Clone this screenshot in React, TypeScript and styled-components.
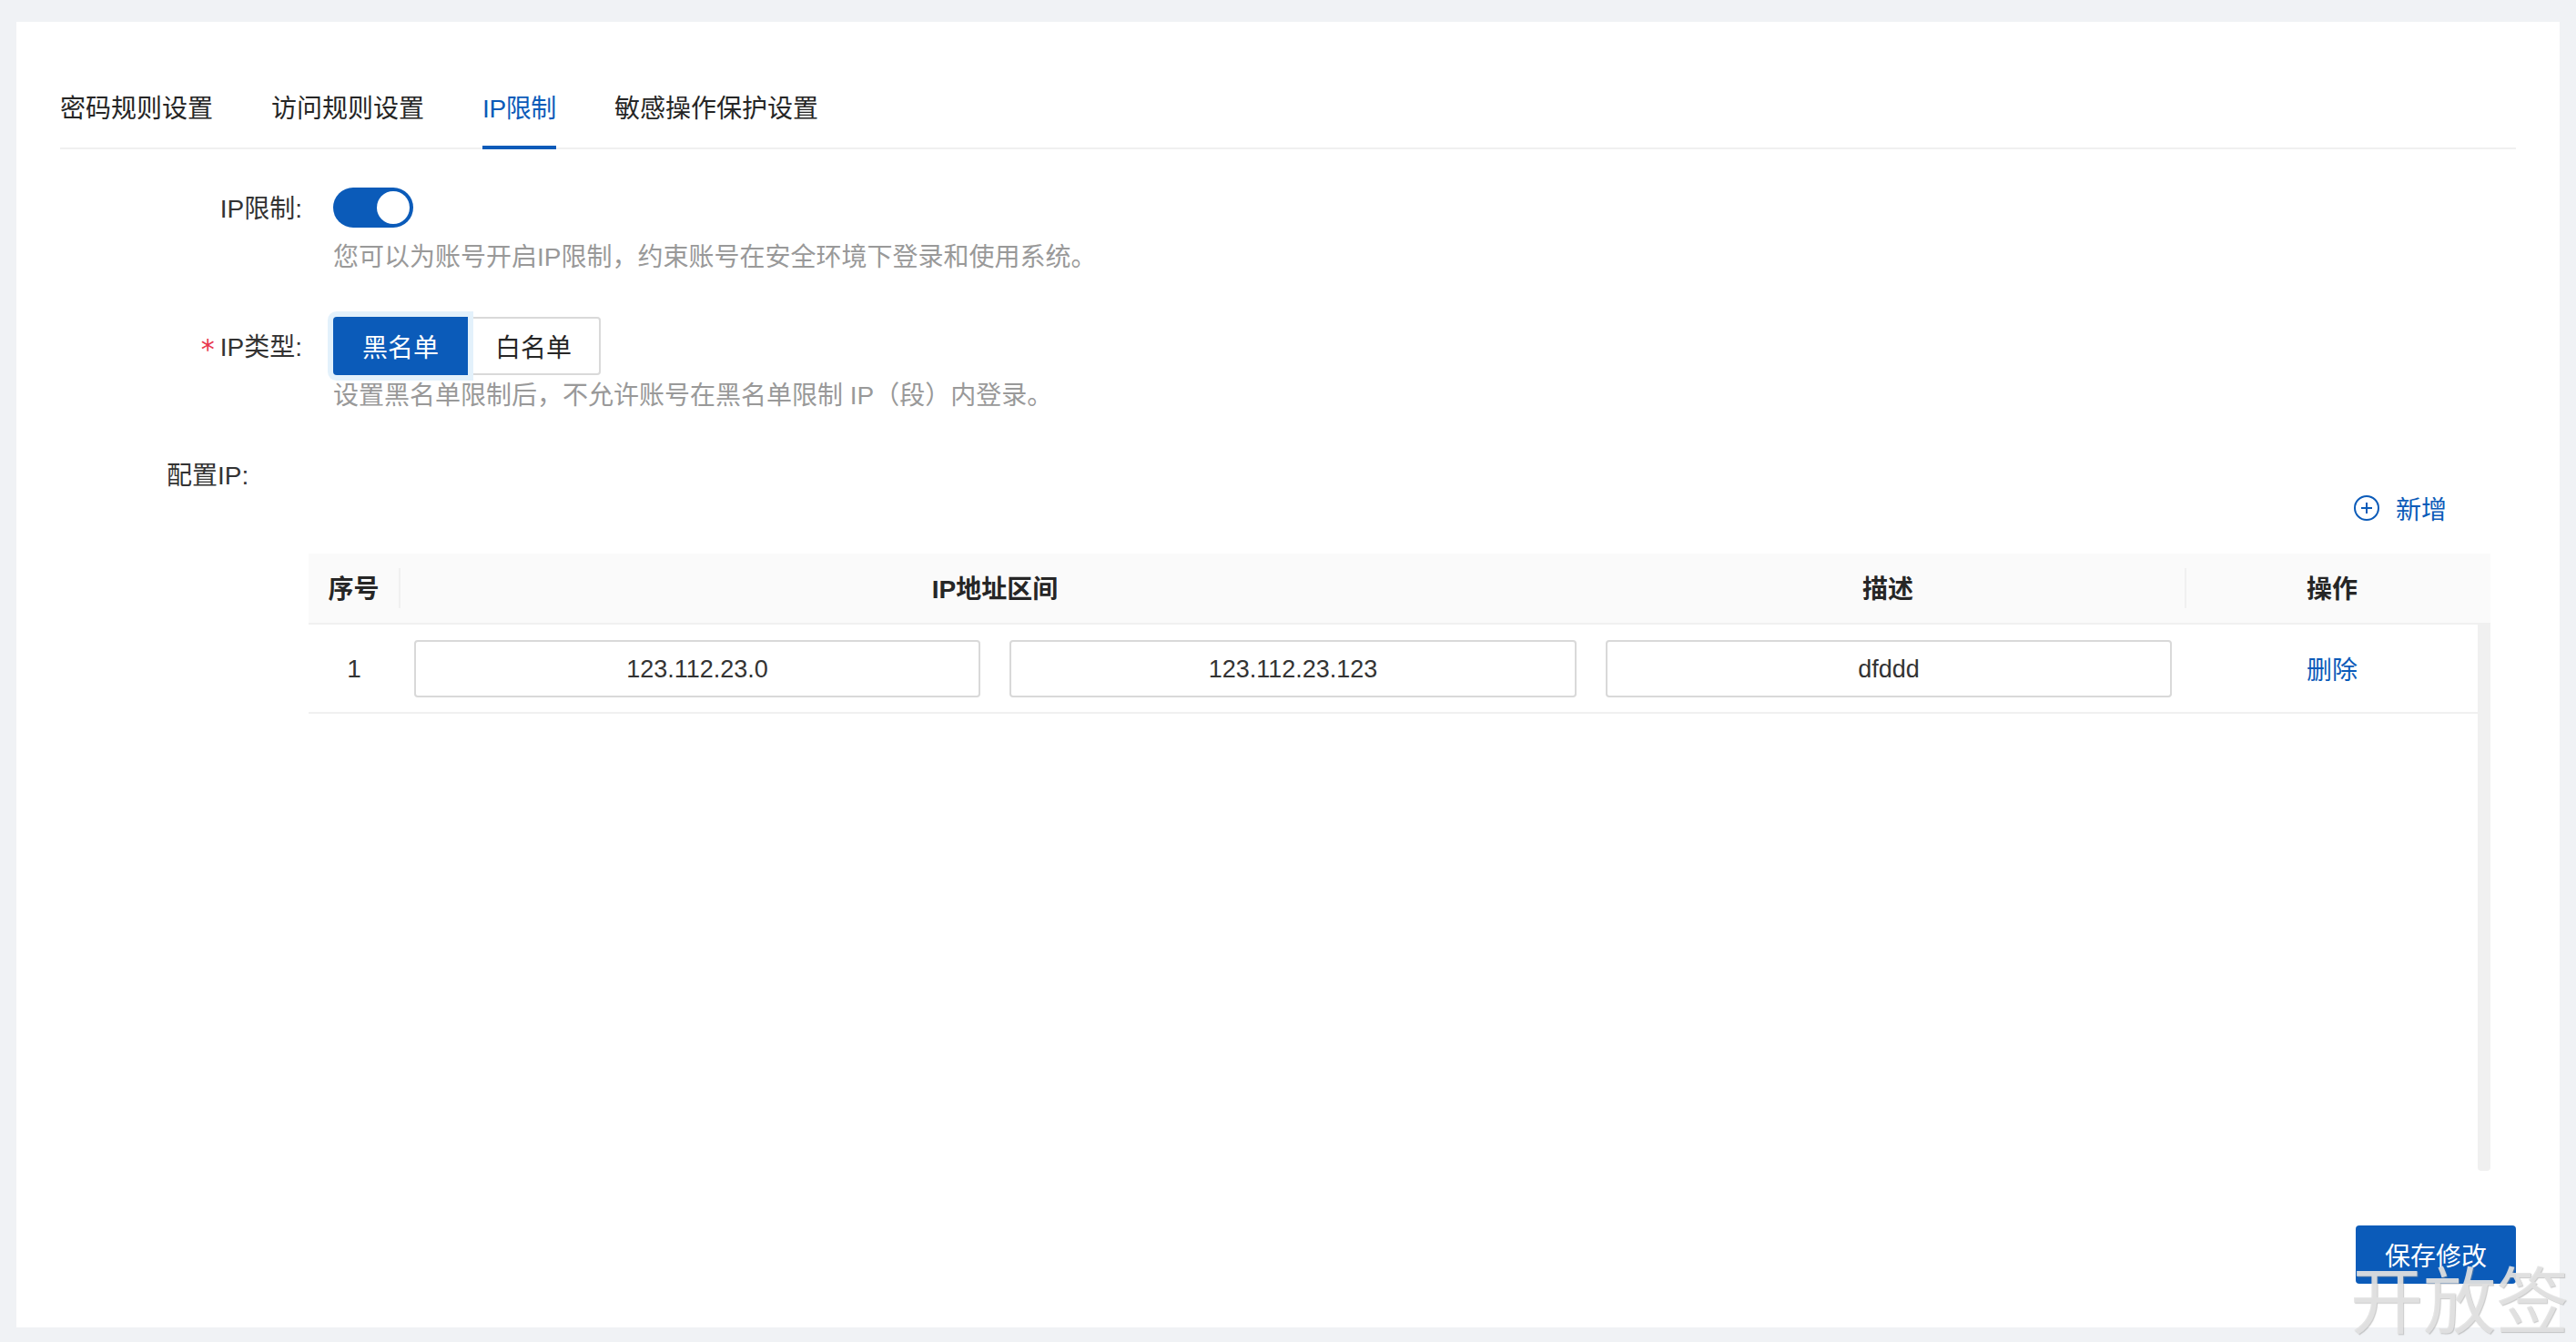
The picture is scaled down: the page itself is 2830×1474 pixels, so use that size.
import React from 'react';
import styled, { createGlobalStyle } from 'styled-components';

const FONT = `"Liberation Sans", "Noto Sans CJK SC", sans-serif`;
const BLUE = '#0b5bb9';

const GlobalStyle = createGlobalStyle`
  html, body {
    margin: 0;
    height: 100%;
    overflow: hidden;
  }
  body {
    background: #f0f2f5;
    font-family: ${FONT};
    font-size: 28px;
    color: #262626;
  }
`;

const Page = styled.div`
  position: relative;
  box-sizing: border-box;
  height: 1474px;
  padding: 24px 18px 16px;
`;

const Card = styled.main`
  box-sizing: border-box;
  height: 1434px;
  padding: 0 48px;
  background: #fff;
`;

const TabBar = styled.nav`
  display: flex;
  gap: 64px;
  padding-top: 48px;
  box-shadow: inset 0 -2px 0 #f0f0f0;
`;

const Tab = styled.div<{ $active?: boolean }>`
  padding: 26px 0 18px;
  line-height: 44px;
  letter-spacing: ${(p) => (p.$active ? '-0.4px' : '0')};
  color: ${(p) => (p.$active ? BLUE : '#262626')};
  border-bottom: 4px solid ${(p) => (p.$active ? BLUE : 'transparent')};
`;

const FormRow = styled.section<{ $top: number }>`
  display: grid;
  grid-template-columns: 300px 1fr;
  margin-top: ${(p) => p.$top}px;
`;

const Label = styled.label`
  display: flex;
  justify-content: flex-end;
  align-items: center;
  padding: 0 34px 3px 0;
  color: #333;
`;

const Required = styled.span`
  margin: 10px 6px 0 0;
  color: #e8384f;
  font-family: "DejaVu Sans", sans-serif;
  font-size: 30px;
`;

const Hint = styled.p<{ $top: number }>`
  grid-column: 2;
  margin: ${(p) => p.$top}px 0 0;
  padding-top: 2px;
  line-height: 38px;
  color: #999;
`;

const Switch = styled.button`
  display: flex;
  justify-content: flex-end;
  align-items: center;
  box-sizing: border-box;
  width: 88px;
  height: 44px;
  padding: 0 4px;
  border: 0;
  border-radius: 22px;
  background: ${BLUE};
`;

const Knob = styled.span`
  width: 36px;
  height: 36px;
  border-radius: 50%;
  background: #fff;
`;

const RadioGroup = styled.div`
  display: flex;
`;

const RadioButton = styled.button<{ $checked?: boolean }>`
  box-sizing: border-box;
  height: 64px;
  font-family: ${FONT};
  font-size: 28px;
  ${(p) =>
    p.$checked
      ? `
    position: relative;
    width: 148px;
    color: #fff;
    background: ${BLUE};
    border: 0;
    border-radius: 4px 0 0 4px;
    box-shadow: 0 0 0 6px #e3f1fb;
  `
      : `
    width: 146px;
    color: #262626;
    background: #fff;
    border: 2px solid #d9d9d9;
    border-left: 0;
    border-radius: 0 4px 4px 0;
  `}
`;

const ConfigLabel = styled.div`
  margin: 46px 0 0 117px;
  padding-top: 2px;
  line-height: 42px;
  color: #333;
`;

const Toolbar = styled.div`
  display: flex;
  justify-content: flex-end;
  height: 64px;
  padding-right: 76px;
`;

const AddLink = styled.a`
  display: flex;
  gap: 18px;
  height: 28px;
  line-height: 34px;
  color: ${BLUE};
`;

const TableWrap = styled.div`
  margin: 0 28px 0 273px;
`;

const HeaderRow = styled.div`
  display: grid;
  grid-template-columns: 101px 1308px 654px 334px;
  padding: 16px 0;
  background: #fafafa;
  border-bottom: 2px solid #f0f0f0;
`;

const HeaderCell = styled.div<{ $divider?: boolean }>`
  box-sizing: border-box;
  padding-top: 3px;
  line-height: 41px;
  font-weight: 700;
  text-align: center;
  color: #262626;
  border-right: 2px solid ${(p) => (p.$divider ? '#f0f0f0' : 'transparent')};
`;

const ActionHeader = styled(HeaderCell)`
  padding-right: 14px;
  border-right: 0;
`;

const TableBody = styled.div`
  display: flex;
  height: 600px;
`;

const Rows = styled.div`
  flex: 1;
`;

const ScrollTrack = styled.div`
  width: 14px;
  background: #f0f0f0;
  border-radius: 0 0 4px 4px;
`;

const BodyRow = styled.div`
  display: grid;
  grid-template-columns: 100px 654px 655px 654px 320px;
  align-items: center;
  height: 96px;
  border-bottom: 2px solid #f0f0f0;
`;

const SeqCell = styled.div`
  padding-top: 2px;
  text-align: center;
  color: #333;
`;

const InputCell = styled.div`
  padding: 0 16px;
`;

const TextInput = styled.input`
  box-sizing: border-box;
  display: block;
  width: 100%;
  height: 63px;
  padding: 2px 2px 0;
  border: 2px solid #d9d9d9;
  border-radius: 4px;
  outline: none;
  font-family: ${FONT};
  font-size: 27px;
  text-align: center;
  color: #333;
`;

const DeleteLink = styled.a`
  text-align: center;
  color: ${BLUE};
`;

const Footer = styled.div`
  display: flex;
  justify-content: flex-end;
  margin-top: 60px;
`;

const SaveButton = styled.button`
  width: 176px;
  height: 64px;
  border: 0;
  border-radius: 4px;
  background: ${BLUE};
  color: #fff;
  font-family: ${FONT};
  font-size: 28px;
`;

const Watermark = styled.div`
  position: absolute;
  right: 8px;
  bottom: 5px;
  font-family: "Noto Sans CJK SC", sans-serif;
  font-size: 80px;
  line-height: 92px;
  color: rgba(226, 226, 226, 0.9);
  text-shadow: 1px 1px 1px rgba(150, 150, 150, 0.5);
`;

const PlusCircle = () => (
  <svg width="28" height="28" viewBox="0 0 28 28" fill="none" stroke={BLUE} strokeWidth="2">
    <circle cx="14" cy="14" r="13" />
    <path d="M8 14h12M14 8v12" />
  </svg>
);

const App: React.FC = () => {
  return (
    <Page>
      <GlobalStyle />
      <Card>
        <TabBar>
          <Tab>密码规则设置</Tab>
          <Tab>访问规则设置</Tab>
          <Tab $active>IP限制</Tab>
          <Tab>敏感操作保护设置</Tab>
        </TabBar>

        <FormRow $top={42}>
          <Label>IP限制:</Label>
          <Switch aria-label="IP限制">
            <Knob />
          </Switch>
          <Hint $top={12}>您可以为账号开启IP限制，约束账号在安全环境下登录和使用系统。</Hint>
        </FormRow>

        <FormRow $top={46}>
          <Label>
            <Required>*</Required>IP类型:
          </Label>
          <RadioGroup>
            <RadioButton $checked>黑名单</RadioButton>
            <RadioButton>白名单</RadioButton>
          </RadioGroup>
          <Hint $top={2}>设置黑名单限制后，不允许账号在黑名单限制 IP（段）内登录。</Hint>
        </FormRow>

        <ConfigLabel>配置IP:</ConfigLabel>
        <Toolbar>
          <AddLink>
            <PlusCircle />
            新增
          </AddLink>
        </Toolbar>

        <TableWrap>
          <HeaderRow>
            <HeaderCell $divider>序号</HeaderCell>
            <HeaderCell>IP地址区间</HeaderCell>
            <HeaderCell $divider>描述</HeaderCell>
            <ActionHeader>操作</ActionHeader>
          </HeaderRow>
          <TableBody>
            <Rows>
              <BodyRow>
                <SeqCell>1</SeqCell>
                <InputCell>
                  <TextInput readOnly value="123.112.23.0" />
                </InputCell>
                <InputCell>
                  <TextInput readOnly value="123.112.23.123" />
                </InputCell>
                <InputCell>
                  <TextInput readOnly value="dfddd" />
                </InputCell>
                <DeleteLink>删除</DeleteLink>
              </BodyRow>
            </Rows>
            <ScrollTrack />
          </TableBody>
        </TableWrap>

        <Footer>
          <SaveButton>保存修改</SaveButton>
        </Footer>
      </Card>
      <Watermark>开放签</Watermark>
    </Page>
  );
};

export default App;
